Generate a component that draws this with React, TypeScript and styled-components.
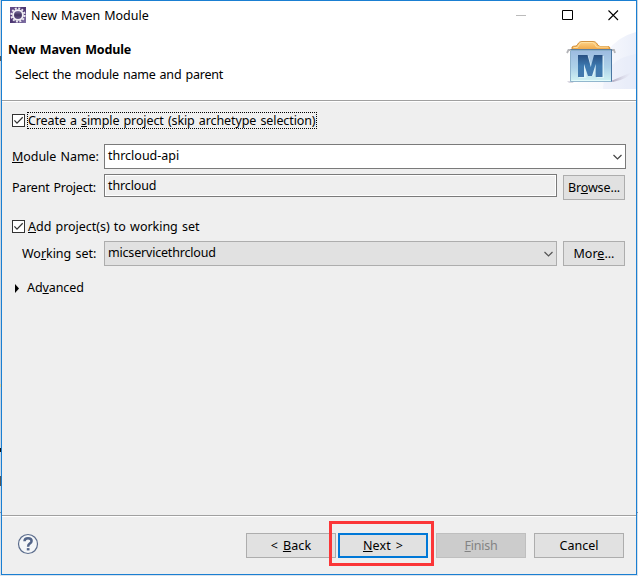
import React from "react";
import styled, { createGlobalStyle, css } from "styled-components";

const GlobalStyle = createGlobalStyle`
  * { box-sizing: border-box; }
  body { margin: 0; overflow: hidden; }
`;

/* A one pixel strip of the desktop shows round the dialog. */
const Desktop = styled.div`
  width: 638px;
  height: 576px;
  padding: 0 1px 1px;
  background:
    linear-gradient(#555, #555) 0 56px / 1px 5px no-repeat,
    linear-gradient(#e0d49a, #e0d49a) 0 384px / 1px 3px no-repeat,
    linear-gradient(#111, #111) 0 448px / 1px 4px no-repeat,
    linear-gradient(#555, #555) 0 476px / 1px 10px no-repeat,
    linear-gradient(#7f8da0, #7f8da0) 0 512px / 638px 1px no-repeat,
    linear-gradient(#ccd6e0 0, #ccd6e0 40%, #c3d3e4 70%, #dbe3ec 100%);
`;

const Dialog = styled.div`
  display: flex;
  flex-direction: column;
  height: 575px;
  border: 1px solid #1a7fd2;
  background: #efefef;
  color: #000;
  font: 12.5px/16px "Noto Sans", "Noto Sans CJK SC", sans-serif;
`;

const Text = styled.span<{ $ls?: number; $ws?: number }>`
  white-space: pre;
  letter-spacing: ${(p) => p.$ls ?? 0}px;
  word-spacing: ${(p) => p.$ws ?? 1}px;
`;

const Mnemonic = styled.span`
  text-decoration: underline 1px;
  text-underline-offset: 1px;
  text-decoration-skip-ink: none;
`;

const Header = styled.header`
  height: 101px;
  flex: none;
  display: flex;
  flex-direction: column;
  background: #fff;
  border-bottom: 1px solid #fff;
  box-shadow: inset 0 -1px #a0a0a0;
`;

const TitleBar = styled.div`
  display: flex;
  height: 30px;
  flex: none;
  align-items: flex-start;
  padding: 6px 17px 0 8px;
`;

const Caption = styled.div`
  flex: 1;
  margin: 1px 0 0 5px;
`;

const WindowControls = styled.div`
  display: flex;
  gap: 35px;
  padding-top: 3px;
`;

const Banner = styled.div`
  display: flex;
  justify-content: space-between;
`;

const BannerText = styled.div`
  display: flex;
  flex-direction: column;
  gap: 9px;
  padding: 11px 0 0 6px;
`;

const Heading = styled.h1`
  margin: 0;
  font: inherit;
  font-weight: 700;
`;

const Description = styled.p`
  margin: 0 0 0 7px;
`;

const Content = styled.main`
  flex: 1;
  display: flex;
  flex-direction: column;
  padding: 10px 10px 0;
`;

const CheckRow = styled.label<{ $space: number }>`
  display: flex;
  align-items: center;
  height: 17px;
  gap: 2px;
  margin-bottom: ${(p) => p.$space}px;
`;

const CheckBox = styled.span`
  width: 13px;
  height: 13px;
  background: #fff;
  border: 1px solid #333;
  display: flex;
`;

const CheckLabel = styled.span<{ $focused?: boolean }>`
  height: 17px;
  line-height: 15px;
  padding: 0;
  border: 1px dotted ${(p) => (p.$focused ? "#000" : "transparent")};
  ${(p) => p.$focused && css`width: 290px;`}
`;

const FieldRow = styled.div<{ $space: number }>`
  display: flex;
  align-items: flex-start;
  margin-bottom: ${(p) => p.$space}px;
`;

const FieldLabel = styled.label<{ $indent?: number; $top: number }>`
  width: 92px;
  flex: none;
  padding: ${(p) => p.$top}px 0 0 ${(p) => p.$indent ?? 0}px;
`;

const Combo = styled.div<{ $muted?: boolean }>`
  flex: 1;
  height: 25px;
  display: flex;
  justify-content: space-between;
  padding: 3px 3px 0 3px;
  border: 1px solid ${(p) => (p.$muted ? "#adadad" : "#7a7a7a")};
  background: ${(p) => (p.$muted ? "#e1e1e1" : "#fff")};
`;

const ReadOnlyField = styled.div`
  flex: 1;
  height: 23px;
  padding: 3px 3px 0;
  border: 1px solid #7a7a7a;
  box-shadow: inset 0 0 0 1px #fff;
`;

const Button = styled.button<{ $w: number; $state?: "default" | "disabled"; $top?: number }>`
  width: ${(p) => p.$w}px;
  height: 25px;
  flex: none;
  margin: ${(p) => p.$top ?? 0}px 0 0;
  padding: 1px 0 0;
  display: flex;
  justify-content: center;
  align-items: center;
  font: inherit;
  color: #000;
  background: #e1e1e1;
  border: 1px solid #adadad;
  ${(p) => p.$state === "default" && css`
    border: 2px solid #0078d7;
  `}
  ${(p) => p.$state === "disabled" && css`
    color: #838383;
    background: #ccc;
    border-color: #bfbfbf;
  `}
`;

const SideButton = styled(Button)`
  margin-left: 6px;
  margin-right: 1px;
`;

const Disclosure = styled.div`
  display: flex;
  align-items: center;
  height: 16px;
  padding-left: 3px;
  gap: 8px;
`;

const Footer = styled.footer`
  height: 59px;
  flex: none;
  display: flex;
  align-items: flex-start;
  justify-content: space-between;
  padding: 17px 12px 0 15px;
  border-top: 1px solid #a0a0a0;
  box-shadow: inset 0 1px #fff;
`;

const Actions = styled.div`
  display: flex;
  gap: 8px;
`;

const Pager = styled.div`
  display: flex;
  gap: 2px;
`;

const Highlighted = styled.div`
  position: relative;
  &::after {
    content: "";
    position: absolute;
    inset: -12px -6px -8px -9px;
    border: 3px solid #fb3638;
    pointer-events: none;
  }
`;

const Check = () => (
  <svg width="11" height="11" viewBox="0 0 11 11" fill="none" stroke="#333" strokeWidth="1.25">
    <path d="M1.4 5.4 4 8.1 9.7 2.3" />
  </svg>
);

const Chevron = ({ muted }: { muted?: boolean }) => (
  <svg width="9" height="20" viewBox="0 0 9 20" fill="none" stroke={muted ? "#555" : "#444"} strokeWidth="1.2">
    <path d="M.5 7 4.5 11l4-4" />
  </svg>
);

const AppIcon = () => (
  <svg width="16" height="16" viewBox="0 0 16 16">
    <defs>
      <linearGradient id="tile" x2="1" y2="1">
        <stop stopColor="#67508c" />
        <stop offset=".5" stopColor="#4a3470" />
        <stop offset="1" stopColor="#8475a8" />
      </linearGradient>
      <linearGradient id="lens" x2="0" y2="1">
        <stop stopColor="#8d83ad" />
        <stop offset=".5" stopColor="#423360" />
        <stop offset="1" stopColor="#6e6092" />
      </linearGradient>
    </defs>
    <path fill="url(#tile)" d="M0 0h16v16H0z" />
    <circle cx="8" cy="8" r="6.6" fill="none" stroke="#ece9f1" strokeWidth="2" strokeDasharray="2 1.456" />
    <circle cx="8" cy="8" r="4.9" fill="url(#lens)" stroke="#f1eff4" strokeWidth="1.9" />
  </svg>
);

const ModuleArt = () => (
  <svg width="74" height="59" viewBox="562 31 74 59">
    <defs>
      <linearGradient id="wash" x2="1" y2="0">
        <stop stopColor="#fff" />
        <stop offset=".55" stopColor="#f8f9fd" />
        <stop offset="1" stopColor="#ebeffa" />
      </linearGradient>
      <linearGradient id="crate" x2="0" y2="1">
        <stop stopColor="#9dbbe0" />
        <stop offset=".55" stopColor="#aed2e9" />
        <stop offset="1" stopColor="#d2f3f3" />
      </linearGradient>
      <linearGradient id="folder" x2="0" y2="1">
        <stop stopColor="#ffd58c" />
        <stop offset="1" stopColor="#f0a848" />
      </linearGradient>
      <linearGradient id="letter" x2="0" y2="1">
        <stop stopColor="#284f82" />
        <stop offset=".5" stopColor="#3d79af" />
        <stop offset="1" stopColor="#4479ac" />
      </linearGradient>
      <linearGradient id="shade" x2="1" y2="0">
        <stop stopColor="#a9a3ba" />
        <stop offset="1" stopColor="#ddd9ea" stopOpacity="0" />
      </linearGradient>
    </defs>
    <path fill="url(#wash)" d="M565 89Q596 76 608 51Q617 37 636 32V89Z" />
    <path fill="#dfe6f7" fillOpacity=".35" d="M603 89Q604 59 636 54V89Z" />
    <path fill="url(#shade)" d="M611 81 632 72Q628 79 613 82Z" />
    <path fill="#b6b2c5" d="M567 81h7l-1 2h-4z" opacity=".5" />
    <path fill="url(#folder)" stroke="#c97e20" strokeWidth=".8" d="M572 49.500v-2.500q1-1 4-1 1.500-.5 2.500-3 1-1.500 3.500-1.500h11q2.500 0 3.500 1.500 1.500 3 3.500 3.500h8.500q1.500 0 1.500 3z" />
    <path stroke="#ffe3a6" strokeWidth=".9" fill="none" d="M573.500 47.500h4q2-4.500 4-5h11q2.500.500 4 4.500h11.500" />
    <path fill="url(#crate)" stroke="#7ba5c2" strokeWidth=".8" d="M570.500 50.500h41v31h-41z" />
    <path stroke="#4a76a2" d="M611.500 50v31.500" />
    <path stroke="#e3fbfa" d="M571.500 80.500h39" />
    <path stroke="#5e7f9e" d="M570 49.500h42" />
    <path fill="none" stroke="#b3b4b8" strokeWidth="1.800" d="M570.500 50h-2l-1.500 3M612 50h2l1 3" />
    <path fill="#ebfcff" opacity=".6" d="M579 56h9.500l3.500 12 3.500-12h8.500v22h-7v-12l-3.500 10h-3.500l-3.500-10v12H579z" />
    <path fill="url(#letter)" d="M578 55h9.500l3.300 12 3.200-12h8.500v22h-6.800V64l-3.700 12h-4l-4-12v13H578z" />
  </svg>
);

const HelpIcon = () => (
  <svg width="22" height="22" viewBox="0 0 22 22">
    <circle cx="11" cy="11" r="9.500" fill="#f4f6f8" stroke="#5b6c8c" strokeWidth="1.200" />
    <path fill="none" stroke="#536589" strokeWidth="2.500" d="M7.500 8.300q0-3.100 3.500-3.100 3.600 0 3.600 2.900 0 1.500-1.900 2.600Q11.100 11.600 11.100 13.700" />
    <path fill="#536589" d="M9.800 15.100h2.700v2.300H9.800z" />
  </svg>
);

export default function App() {
  return (
    <>
      <GlobalStyle />
      <Desktop>
        <Dialog>
          <Header>
            <TitleBar>
              <AppIcon />
              <Caption><Text $ws={0.8} $ls={-0.04}>New Maven Module</Text></Caption>
              <WindowControls>
                <svg width="11" height="11"><path stroke="#bbb" d="M0 5.500h10" /></svg>
                <svg width="11" height="11"><path fill="none" stroke="#000" d="M.5.5h10v9h-10z" /></svg>
                <svg width="11" height="11"><path stroke="#000" strokeWidth="1.100" d="m.5.5 9.500 9.500M10 .5.500 10" /></svg>
              </WindowControls>
            </TitleBar>
            <Banner>
              <BannerText>
                <Heading><Text $ls={-0.14}>New Maven Module</Text></Heading>
                <Description><Text $ls={-0.21}>Select the module name and parent</Text></Description>
              </BannerText>
              <ModuleArt />
            </Banner>
          </Header>

          <Content>
            <CheckRow $space={15}>
              <CheckBox><Check /></CheckBox>
              <CheckLabel $focused>
                <Text $ls={-0.1}>Create a <Mnemonic>s</Mnemonic>imple project (skip archetype selection)</Text>
              </CheckLabel>
            </CheckRow>
            <FieldRow $space={5}>
              <FieldLabel $top={5}><Text $ls={-0.05}><Mnemonic>M</Mnemonic>odule Name:</Text></FieldLabel>
              <Combo>
                <Text $ls={-0.01}>thrcloud-api</Text>
                <Chevron />
              </Combo>
            </FieldRow>
            <FieldRow $space={18}>
              <FieldLabel $top={6}><Text $ls={-0.22}>Parent Project:</Text></FieldLabel>
              <ReadOnlyField><Text $ls={-0.12}>thrcloud</Text></ReadOnlyField>
              <SideButton $w={62} $top={1}><Text $ls={-0.12}>Br<Mnemonic>o</Mnemonic>wse...</Text></SideButton>
            </FieldRow>
            <CheckRow $space={6}>
              <CheckBox><Check /></CheckBox>
              <CheckLabel><Text $ls={-0.03}><Mnemonic>A</Mnemonic>dd project(s) to working set</Text></CheckLabel>
            </CheckRow>
            <FieldRow $space={14}>
              <FieldLabel $top={5} $indent={10}><Text $ls={-0.03}>Wo<Mnemonic>r</Mnemonic>king set:</Text></FieldLabel>
              <Combo $muted>
                <Text $ls={-0.19}>micservicethrcloud</Text>
                <Chevron muted />
              </Combo>
              <SideButton $w={62}><Text>Mor<Mnemonic>e</Mnemonic>...</Text></SideButton>
            </FieldRow>
            <Disclosure>
              <svg width="4" height="9"><path d="M0 0 4 4.500 0 9z" /></svg>
              <Text $ls={-0.08}>Ad<Mnemonic>v</Mnemonic>anced</Text>
            </Disclosure>
          </Content>

          <Footer>
            <HelpIcon />
            <Actions>
              <Pager>
                <Button $w={90}><Text $ls={0.12} $ws={1.5}>&lt; <Mnemonic>B</Mnemonic>ack</Text></Button>
                <Highlighted>
                  <Button $w={90} $state="default"><Text $ls={0.12} $ws={1.5}><Mnemonic>N</Mnemonic>ext &gt;</Text></Button>
                </Highlighted>
              </Pager>
              <Button $w={90} $state="disabled" disabled><Text $ls={-0.25}><Mnemonic>F</Mnemonic>inish</Text></Button>
              <Button $w={90}><Text>Cancel</Text></Button>
            </Actions>
          </Footer>
        </Dialog>
      </Desktop>
    </>
  );
}
